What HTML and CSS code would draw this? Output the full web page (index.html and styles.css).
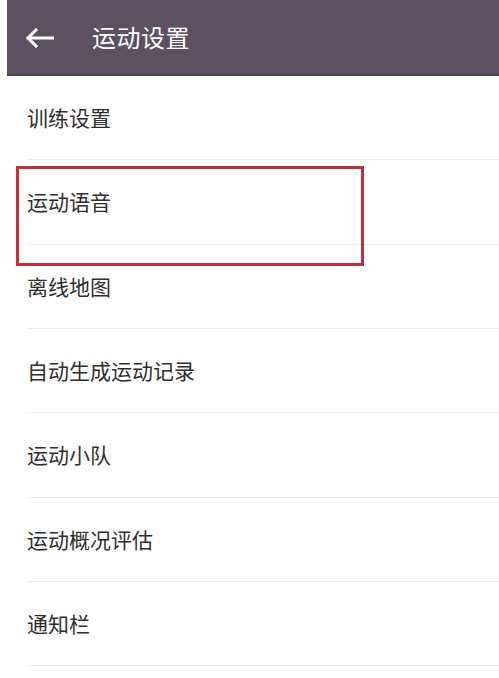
FILE: index.html
```html
<!DOCTYPE html>
<html lang="zh-CN">
<head>
<meta charset="utf-8">
<title>运动设置</title>
<link rel="stylesheet" href="styles.css">
</head>
<body>
<header class="appbar">
  <svg class="back" width="30" height="20" viewBox="0 0 30 20" aria-hidden="true">
    <path d="M29 10 H4 M12 2 L4 10 L12 18" fill="none" stroke="#ffffff" stroke-width="3" stroke-linecap="square" stroke-linejoin="miter"/>
  </svg>
  <h1 class="title">运动设置</h1>
</header>
<main class="list">
  <div class="item">训练设置</div>
  <div class="item">运动语音</div>
  <div class="item">离线地图</div>
  <div class="item">自动生成运动记录</div>
  <div class="item">运动小队</div>
  <div class="item">运动概况评估</div>
  <div class="item">通知栏</div>
  <div class="highlight"></div>
</main>
</body>
</html>
```
FILE: styles.css
```css
html, body {
  margin: 0;
  padding: 0;
  background: #ffffff;
}
body {
  font-family: "Noto Sans CJK SC", "Noto Sans", sans-serif;
  overflow: hidden;
}
.appbar {
  margin-left: 7px;
  height: 74px;
  background: #5b5162;
  border-bottom: 2px solid #4c4452;
  display: flex;
  align-items: center;
}
.back {
  margin-left: 17px;
  margin-top: 2px;
  flex: none;
}
.title {
  margin: 0 0 0 38px;
  font-size: 24px;
  font-weight: 400;
  color: #ffffff;
  line-height: 1;
  letter-spacing: 0.5px;
}
.list {
  position: relative;
}
.item {
  margin-left: 27px;
  height: 84.33px;
  box-sizing: border-box;
  border-bottom: 1px solid #ececec;
  display: flex;
  align-items: center;
  font-size: 21px;
  color: #2e2e2e;
  line-height: 1;
}
.highlight {
  position: absolute;
  left: 16px;
  top: 90px;
  width: 348px;
  height: 100px;
  box-sizing: border-box;
  border: 3px solid #c3303b;
}
```
